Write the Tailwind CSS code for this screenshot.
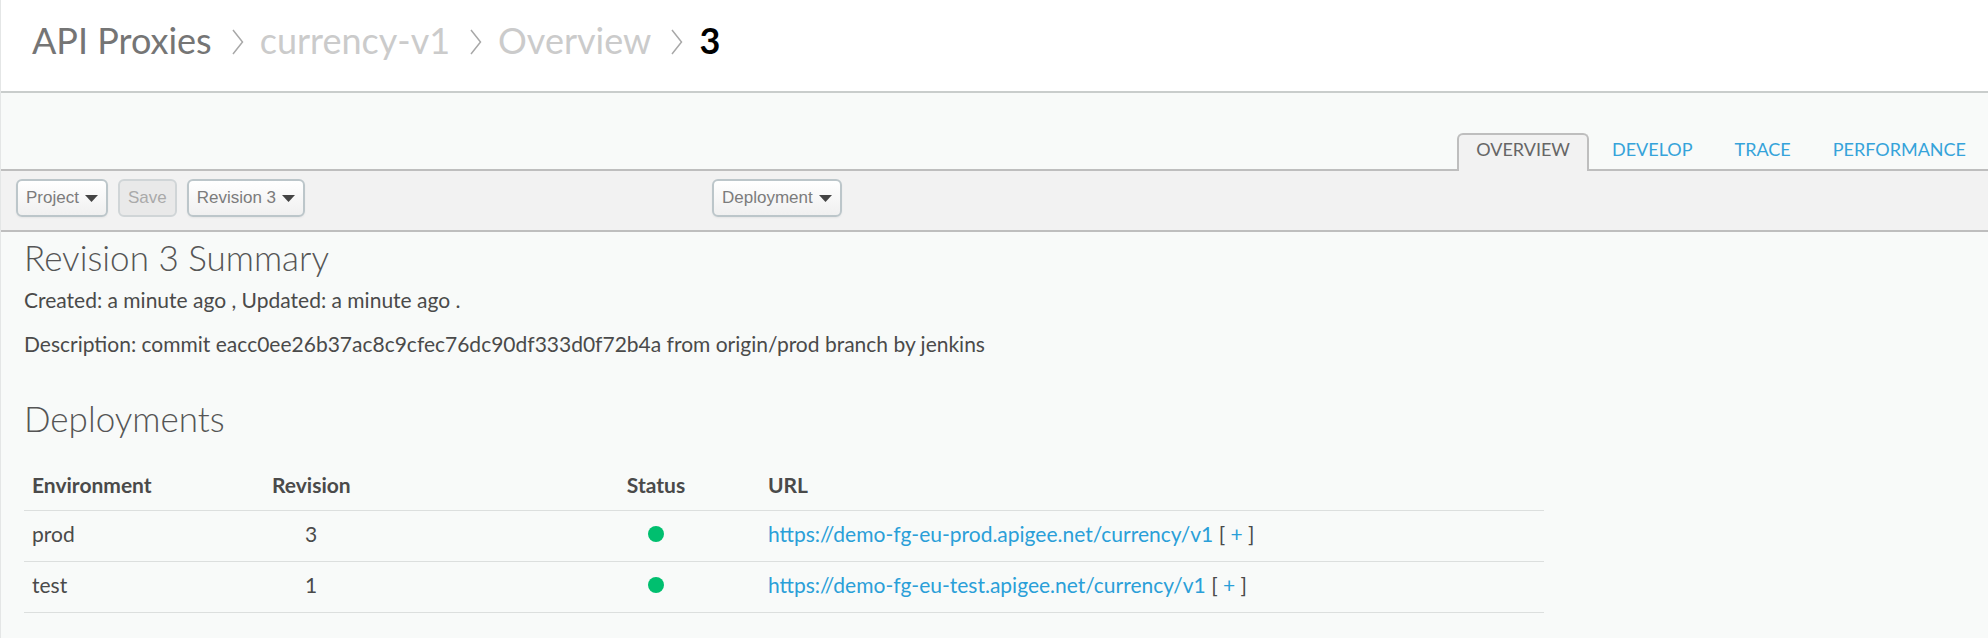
<!DOCTYPE html>
<html lang="en">
<head>
<meta charset="utf-8">
<title>currency-v1 Overview</title>
<script src="https://cdn.jsdelivr.net/npm/@tailwindcss/browser@4"></script>
</head>
<body class="min-h-screen border-l border-[#e4e6e6] bg-[#f8faf9] font-['Lato',sans-serif] text-[21px] leading-[30px] text-[#4a4a4a]">
<header class="border-b-2 border-[#c9cdcc] bg-white px-[31px] pt-[18px] pb-[29px]">
  <nav aria-label="Breadcrumb">
    <ol class="flex items-center text-[36px] leading-[44px] text-[#cbcbcb]">
      <li><a href="#" class="text-[#757575]">API Proxies</a></li>
      <li aria-hidden="true" class="mt-1 ml-5 mr-4"><svg width="12" height="26" viewBox="0 0 12 26" fill="none" stroke="#a8a8a8" stroke-width="1.5"><path d="M1 1 10.5 13 1 25"/></svg></li>
      <li><a href="#">currency-v1</a></li>
      <li aria-hidden="true" class="mt-1 ml-5 mr-4"><svg width="12" height="26" viewBox="0 0 12 26" fill="none" stroke="#a8a8a8" stroke-width="1.5"><path d="M1 1 10.5 13 1 25"/></svg></li>
      <li><a href="#">Overview</a></li>
      <li aria-hidden="true" class="mt-1 ml-5 mr-4"><svg width="12" height="26" viewBox="0 0 12 26" fill="none" stroke="#a8a8a8" stroke-width="1.5"><path d="M1 1 10.5 13 1 25"/></svg></li>
      <li aria-current="page" class="font-bold text-black">3</li>
    </ol>
  </nav>
</header>

<nav aria-label="Proxy views" class="flex items-end justify-end border-b-2 border-[#bebebe] pt-10 text-[18px] leading-[28px] text-[#35a3da]">
  <a href="#" class="-mb-[2px] rounded-t-md border-2 border-b-0 border-[#bebebe] bg-[#f2f2f2] px-[17px] pb-2 text-[#666]">OVERVIEW</a>
  <a href="#" class="ml-[2px] px-[21px] pb-[6px]">DEVELOP</a>
  <a href="#" class="px-[21px] pb-[6px]">TRACE</a>
  <a href="#" class="pr-[22px] pl-[21px] pb-[6px]">PERFORMANCE</a>
</nav>

<div role="toolbar" class="flex border-b-2 border-[#bebebe] bg-[#f2f2f2] px-[15px] pt-2 pb-[13px] font-['Liberation_Sans',sans-serif] text-[17px] leading-[34px] text-[#7c7c7c]">
  <div class="flex w-[696px] gap-[10px]">
    <button type="button" class="flex items-center gap-[6px] rounded-md border-2 border-[#bcc6ca] bg-linear-to-b from-white to-[#f0f0f0] px-2 shadow-xs">Project<svg width="13" height="7" viewBox="0 0 13 7" fill="#444"><path d="M0 0H13L6.500 7Z"/></svg></button>
    <button type="button" disabled class="rounded-md border-2 border-[#d0d5d7] bg-[#e9e9e9] px-2 text-[#aaa]">Save</button>
    <button type="button" class="flex items-center gap-[6px] rounded-md border-2 border-[#bcc6ca] bg-linear-to-b from-white to-[#f0f0f0] px-2 shadow-xs">Revision 3<svg width="13" height="7" viewBox="0 0 13 7" fill="#444"><path d="M0 0H13L6.500 7Z"/></svg></button>
  </div>
  <button type="button" class="flex items-center gap-[6px] rounded-md border-2 border-[#bcc6ca] bg-linear-to-b from-white to-[#f0f0f0] px-2 shadow-xs">Deployment<svg width="13" height="7" viewBox="0 0 13 7" fill="#444"><path d="M0 0H13L6.500 7Z"/></svg></button>
</div>

<main class="px-[23px] pt-[1px]">
  <h1 class="text-[35px] leading-[48px] font-light text-[#555]">Revision 3 Summary</h1>
  <p class="mt-1">Created: a minute ago , Updated: a minute ago .</p>
  <p class="mt-[14px]">Description: commit eacc0ee26b37ac8c9cfec76dc90df333d0f72b4a from origin/prod branch by jenkins</p>
  <h2 class="mt-[35px] text-[35px] leading-[48px] font-light text-[#555]">Deployments</h2>
  <table class="mt-[23px] w-[78.3%] table-fixed border-collapse text-left">
    <colgroup><col class="w-[240px]"><col class="w-[288px]"><col class="w-[208px]"><col></colgroup>
    <thead>
      <tr class="border-b border-[#dcdfde]">
        <th class="px-2 pt-[5px] pb-[10px]">Environment</th>
        <th class="px-2 pt-[5px] pb-[10px]"><span class="inline-block w-[78px] text-center">Revision</span></th>
        <th class="px-2 pt-[5px] pb-[10px] text-center">Status</th>
        <th class="px-2 pt-[5px] pb-[10px]">URL</th>
      </tr>
    </thead>
    <tbody>
      <tr class="border-b border-[#dcdfde]">
        <td class="px-2 pt-2 pb-3">prod</td>
        <td class="px-2 pt-2 pb-3"><span class="inline-block w-[78px] text-center">3</span></td>
        <td class="px-2 pt-2 pb-3"><span role="img" aria-label="Deployed" class="mx-auto block size-4 rounded-full bg-[#00bf6f]"></span></td>
        <td class="px-2 pt-2 pb-3"><a href="#" class="text-[#2a9fd8]">https://demo-fg-eu-prod.apigee.net/currency/v1</a> [ <a href="#" class="text-[#2a9fd8]">+</a> ]</td>
      </tr>
      <tr class="border-b border-[#dcdfde]">
        <td class="px-2 pt-2 pb-3">test</td>
        <td class="px-2 pt-2 pb-3"><span class="inline-block w-[78px] text-center">1</span></td>
        <td class="px-2 pt-2 pb-3"><span role="img" aria-label="Deployed" class="mx-auto block size-4 rounded-full bg-[#00bf6f]"></span></td>
        <td class="px-2 pt-2 pb-3"><a href="#" class="text-[#2a9fd8]">https://demo-fg-eu-test.apigee.net/currency/v1</a> [ <a href="#" class="text-[#2a9fd8]">+</a> ]</td>
      </tr>
    </tbody>
  </table>
</main>
</body>
</html>
